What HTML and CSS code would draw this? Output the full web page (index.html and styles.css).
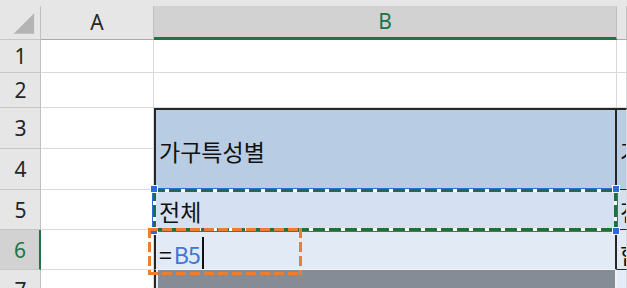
FILE: index.html
```html
<!DOCTYPE html>
<html lang="ko">

<head>
    <meta charset="UTF-8">
    <title>가구특성별 - 시트</title>
    <link rel="stylesheet" href="styles.css">
</head>

<body>
    <div class="sheet">
        <div class="grid">
            <!-- 열 머리글 -->
            <div class="corner">
                <svg width="41" height="34" viewBox="0 0 41 34">
                    <polygon points="35,7 35,28 14,28" fill="#b4b4b4" />
                </svg>
            </div>
            <div class="col-head">A</div>
            <div class="col-head is-active">B</div>
            <div class="col-head"></div>

            <!-- 1행 -->
            <div class="row-head">1</div>
            <div class="cell"></div>
            <div class="cell"></div>
            <div class="cell"></div>

            <!-- 2행 -->
            <div class="row-head">2</div>
            <div class="cell"></div>
            <div class="cell"></div>
            <div class="cell"></div>

            <!-- 3~4행 (병합) -->
            <div class="row-head">3</div>
            <div class="cell"></div>
            <div class="cell tbl tbl-head">가구특성별</div>
            <div class="cell tbl-c tbl-head">가구원</div>

            <div class="row-head">4</div>
            <div class="cell"></div>

            <!-- 5행 -->
            <div class="row-head">5</div>
            <div class="cell"></div>
            <div class="cell tbl tbl-total">전체</div>
            <div class="cell tbl-c tbl-total">전국</div>

            <!-- 6행 (편집 중) -->
            <div class="row-head is-active">6</div>
            <div class="cell"></div>
            <div class="cell tbl tbl-edit">=<span class="ref">B5</span><span class="caret"></span></div>
            <div class="cell tbl-c tbl-edit">합계</div>

            <!-- 7행 -->
            <div class="row-head">7</div>
            <div class="cell"></div>
            <div class="cell tbl tbl-dark"></div>
            <div class="cell tbl-c tbl-light"></div>
        </div>

        <!-- B5 참조 범위 + 복사 표시 -->
        <div class="ref-box">
            <div class="marquee"></div>
            <span class="handle h-tl"></span>
            <span class="handle h-tr"></span>
            <span class="handle h-br"></span>
            <span class="handle h-bl"></span>
        </div>

        <!-- 강조 표시 -->
        <div class="note-box"></div>
    </div>
</body>

</html>
```

FILE: styles.css
```css
body {
    margin: 0;
    background-color: #e6e6e6;
    overflow: hidden;
    font-family: "Noto Sans CJK KR", "Noto Sans", sans-serif;
}

.sheet {
    position: relative;
    padding-top: 6px;
    width: 627px;
    height: 282px;
    overflow: hidden;
}

.grid {
    display: grid;
    grid-template-columns: 41px 113px 463px 1fr;
    grid-template-rows: 34px 33px 35px 41px 41px 40px 40px 40px;
}

/* 머리글 */
.corner,
.col-head,
.row-head {
    box-sizing: border-box;
    background-color: #e6e6e6;
    border-right: 1px solid #c0c0c0;
    border-bottom: 1px solid #c6c6c6;
    color: #262626;
    font-family: "Noto Sans", sans-serif;
    font-size: 21px;
    display: flex;
    align-items: center;
    justify-content: center;
}

.corner svg {
    display: block;
}

.col-head {
    border-bottom-color: #ababab;
    padding-bottom: 1px;
}

.col-head.is-active {
    background-color: #d2d2d2;
    color: #217346;
    border-bottom: 3px solid #217346;
}

.row-head {
    grid-column: 1;
    padding-left: 1px;
}

.row-head.is-active {
    background-color: #d2d2d2;
    color: #217346;
    border-right: 2px solid #217346;
}

/* 셀 */
.cell {
    box-sizing: border-box;
    background-color: #fff;
    border-right: 1px solid #d9d9d9;
    border-bottom: 1px solid #dadada;
    color: #111;
    font-size: 23px;
    white-space: nowrap;
    overflow: hidden;
    display: flex;
    align-items: center;
    padding-left: 3px;
}

.tbl {
    border-left: 2px solid #262626;
    border-right: 2px solid #262626;
}

.tbl-head {
    grid-row: span 2;
    border-top: 2px solid #262626;
    background-color: #b8cce4;
    padding-top: 2px;
}

.tbl-c.tbl-head {
    border-bottom: 1px solid #262626;
}

.tbl-total {
    background-color: #d5e1f2;
    border-bottom: 1px solid #262626;
    padding-top: 3px;
}

.tbl-edit {
    background-color: #e2eaf6;
    border-bottom: 1px solid #f2f2f2;
    padding-top: 8px;
}

.tbl-c.tbl-edit {
    border-bottom: 1px solid #262626;
}

.tbl-edit .ref {
    color: #3c78d8;
    margin-left: 2px;
    letter-spacing: -1px;
}

.caret {
    display: inline-block;
    width: 2px;
    height: 32px;
    margin-left: 2px;
    margin-top: -2px;
    background-color: #111;
}

.tbl-dark {
    background-color: #868c95;
    box-shadow: inset 2px 0 0 #e2eaf6;
    border-right-color: #f2f2f2;
}

.tbl-light {
    background-color: #e4ecf7;
}

/* 참조 범위 (B5) */
.ref-box {
    position: absolute;
    left: 152px;
    top: 188px;
    width: 466px;
    height: 44px;
    box-sizing: border-box;
    border: 1px solid #2f6bd6;
}

.marquee {
    position: absolute;
    inset: 0;
    background:
        repeating-linear-gradient(90deg, #1f7040 0 12px, #fff 12px 16px) top / 100% 3px no-repeat,
        repeating-linear-gradient(90deg, #1f7040 0 12px, #fff 12px 16px) bottom / 100% 3px no-repeat,
        repeating-linear-gradient(180deg, #1f7040 0 12px, #fff 12px 16px) left / 3px 100% no-repeat,
        repeating-linear-gradient(180deg, #1f7040 0 12px, #fff 12px 16px) right / 3px 100% no-repeat;
}

.handle {
    position: absolute;
    width: 6px;
    height: 6px;
    background-color: #2f6bd6;
    border: 1px solid #fff;
}

.h-tl {
    left: -3px;
    top: -4px;
}

.h-tr {
    right: -3px;
    top: -4px;
}

.h-br {
    right: -3px;
    bottom: -4px;
}

.h-bl {
    left: -3px;
    bottom: -4px;
}

/* 주황색 점선 강조 */
.note-box {
    position: absolute;
    left: 148px;
    top: 228px;
    width: 154px;
    height: 47px;
    background:
        repeating-linear-gradient(90deg, #ed7d31 0 10px, transparent 10px 14px) top / 100% 3px no-repeat,
        repeating-linear-gradient(90deg, #ed7d31 0 10px, transparent 10px 14px) bottom / 100% 3px no-repeat,
        repeating-linear-gradient(180deg, #ed7d31 0 10px, transparent 10px 14px) left / 3px 100% no-repeat,
        repeating-linear-gradient(180deg, #ed7d31 0 10px, transparent 10px 14px) right / 3px 100% no-repeat;
}
```
